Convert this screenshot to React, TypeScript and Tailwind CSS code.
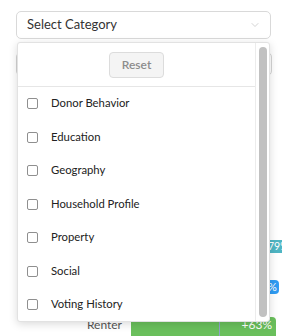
import { ChevronDown } from 'lucide-react'

const CATEGORIAS = [
  'Donor Behavior',
  'Education',
  'Geography',
  'Household Profile',
  'Property',
  'Social',
  'Voting History',
]

export default function App() {
  return (
    <div
      className="relative h-[336px] w-[282px] overflow-hidden bg-white"
      style={{ fontFamily: 'Lato, "Open Sans", sans-serif' }}
    >
      {/* SELECT */}
      <div className="ml-4 mt-[11px] flex h-[28px] w-[255px] items-center justify-between rounded-[5px] border border-[#d9d9d9] bg-white pl-[10px] pr-[9px]">
        <span className="text-[13px] text-[#333]">Select Category</span>
        <ChevronDown className="h-[12px] w-[12px] text-[#c4c4c4]" strokeWidth={1.5} />
      </div>

      {/* conteúdo por trás */}
      <div className="ml-4 mt-[13px] h-[24px] w-[256px] rounded-[5px] border border-[#d4d4d4] bg-white" />

      <div className="relative mt-[164px] h-[13px]">
        <div className="absolute left-[268px] top-0 flex h-[13px] w-[20px] items-center rounded-r-[3px] bg-[#4fb5c3] text-[10.5px] text-white">
          79%
        </div>
      </div>
      <div className="relative mt-[27px] h-[14px]">
        <div className="absolute left-[267px] top-0 flex h-[14px] w-[12px] items-center rounded-r-[4px] bg-[#2f9cf3] pl-[1px] text-[11px] text-white">
          %
        </div>
      </div>

      <div className="mt-[23px] flex h-[19px] items-start">
        <div className="w-[122px] pt-[0px] text-right text-[12px] leading-[15px] text-[#555]">Renter</div>
        <div className="relative ml-[9px] flex h-[19px] w-[145px] items-start justify-end rounded-tr-[4px] bg-[#6abf5c] pr-[4px] text-[12px] leading-[15px] text-white">
          <div className="absolute left-[88px] top-0 h-full w-px bg-[#8fa0c8]" />
          +63%
        </div>
      </div>

      {/* DROPDOWN */}
      <div className="absolute left-[17px] top-[42px] flex h-[280px] w-[253px] rounded-[3px] border border-[#e2e2e2] bg-white shadow-[0_2px_8px_rgba(0,0,0,0.15)]">
        <div className="flex w-[238px] flex-col">
          <div className="flex h-[44px] shrink-0 items-center justify-center border-b border-[#e6e6e6]">
            <button className="mt-[1px] h-[26px] w-[55px] rounded-[4px] border border-[#dcdcdc] bg-[#f4f4f4] text-[12px] font-semibold text-[#8c8c8c]">
              Reset
            </button>
          </div>
          {CATEGORIAS.map((c) => (
            <label key={c} className="flex h-[33.5px] shrink-0 items-center">
              <span className="ml-[9px] h-[11px] w-[11px] rounded-[2px] border border-[#8f8f8f] bg-white" />
              <span className="ml-[13px] text-[11.3px] text-[#222]">{c}</span>
            </label>
          ))}
        </div>
        <div className="flex w-[14px] justify-center border-l border-[#ececec] pb-[4px] pt-[4px]">
          <div className="w-[8px] rounded-full bg-[#c1c1c1]" />
        </div>
      </div>
    </div>
  )
}
